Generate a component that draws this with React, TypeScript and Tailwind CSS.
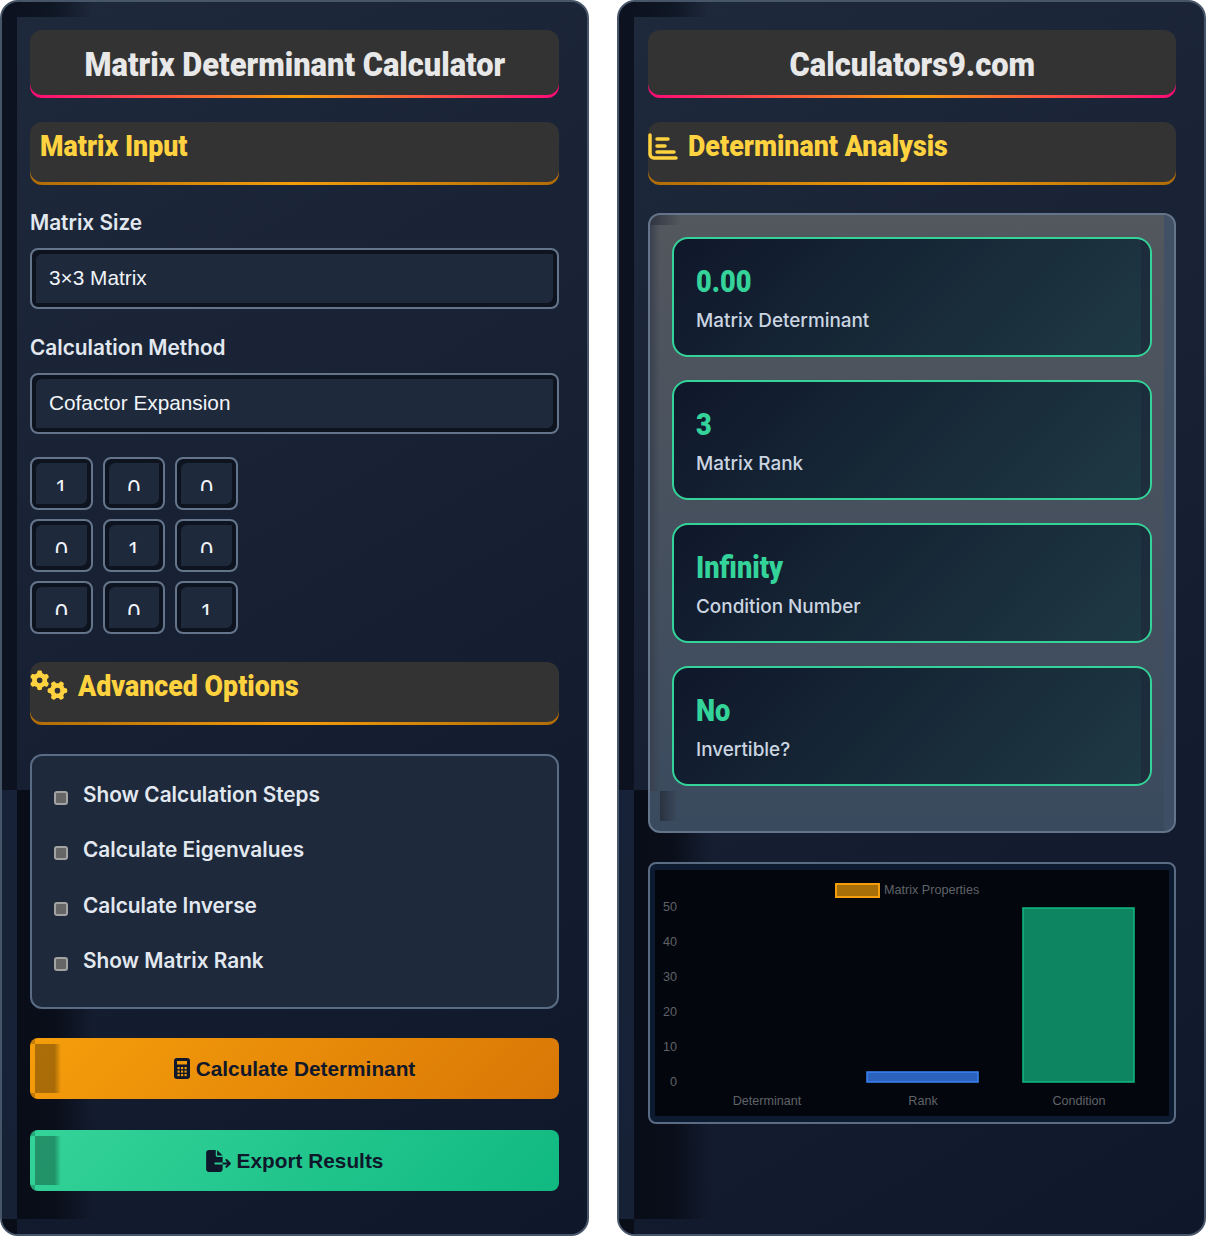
import { FaGears, FaFileExport } from "react-icons/fa6";

const inter = "[font-family:Inter,'Liberation_Sans',sans-serif]";
const lib = "[font-family:'Liberation_Sans',Arial,sans-serif]";

function Shadows() {
  return (
    <>
      <div className="absolute left-0 top-0 h-[788px] w-[15px] rounded-tl-[14px] bg-[#0c121f]" />
      <div className="absolute left-0 top-[788px] bottom-[0px] w-[15px] rounded-bl-[14px] bg-[#18233a]/70" />
      <div className="absolute left-[15px] top-0 h-[15px] w-[75px] bg-gradient-to-r from-[#0c121f] via-[#0c121f]/80 to-transparent" />
      <div className="absolute left-[15px] top-[788px] bottom-[15px] w-[78px] bg-gradient-to-r from-[#090d18] via-[#090d18]/90 to-transparent" />
      <div className="absolute left-0 bottom-0 h-[15px] w-[15px] rounded-bl-[14px] bg-[#090d18]" />
    </>
  );
}

function Title({ children }: { children: string }) {
  return (
    <div className="relative h-[68px] w-full">
      <div className="absolute inset-x-0 bottom-0 h-6 rounded-b-xl bg-[linear-gradient(90deg,#ff0a78,#f59e0b,#ff0a78)]" />
      <div className="relative flex h-[65px] items-center justify-center rounded-xl bg-[#333333] pt-[3px]">
        <span className="inline-block origin-center scale-x-[0.907] whitespace-nowrap font-['Roboto',sans-serif] text-[34px] font-black leading-none text-[#e8e8e8]">
          {children}
        </span>
      </div>
    </div>
  );
}

function Heading({ children, icon, pad }: { children: string; icon?: React.ReactNode; pad?: boolean }) {
  return (
    <div className="relative h-[63px] w-full">
      <div className="absolute inset-x-0 bottom-0 h-6 rounded-b-xl bg-[linear-gradient(90deg,#b06c08,#f59e0b,#b06c08)]" />
      <div className={`relative flex h-[60px] items-start gap-[10px] rounded-xl bg-[#333333] pt-[8px] ${pad ? "pl-[10px]" : ""}`}>
        {icon}
        <span className="inline-block origin-left scale-x-[0.893] whitespace-nowrap font-['Roboto',sans-serif] text-[30px] font-black leading-[32px] text-[#ffd23f]">
          {children}
        </span>
      </div>
    </div>
  );
}

function Field({ label, value, cls }: { label: string; value: string; cls: string }) {
  return (
    <div className={cls}>
      <div className="text-[20.8px] font-semibold leading-[27px] text-[#e2e8f0]">{label}</div>
      <div className={`mt-[12px] flex h-[61px] items-center rounded-lg border-2 border-[#64748b] bg-[#1e293b] pb-[2px] pl-[17px] text-[20.8px] text-[#f1f5f9] shadow-[inset_4px_4px_0_#0d1420,inset_-4px_-4px_0_#0d1420] ${lib}`}>
        {value}
      </div>
    </div>
  );
}

function Cell({ v }: { v: string }) {
  return (
    <div className="flex h-[53px] w-full items-start justify-center overflow-hidden rounded-lg border-2 border-[#64748b] bg-[#1e293b] pt-[20px] shadow-[inset_4px_4px_0_#0d1420,inset_-4px_-4px_0_#0d1420]">
      <span className={`block h-[12px] overflow-hidden text-[23px] leading-[20px] text-[#f1f5f9] ${lib}`}>{v}</span>
    </div>
  );
}

function Check({ label }: { label: string }) {
  return (
    <div className="flex h-[55.4px] items-start gap-[15px]">
      <div className="mt-[24px] h-[14px] w-[14px] shrink-0 rounded-[3px] border-2 border-[#a3a3a3] bg-[#666666]" />
      <span className="mt-[14px] text-[20.8px] font-semibold leading-[28px] text-[#e2e8f0]">{label}</span>
    </div>
  );
}

function Btn({ cls, icon, label }: { cls: string; icon: React.ReactNode; label: string }) {
  return (
    <div className={`relative flex h-[61px] items-center justify-center gap-[6px] overflow-hidden rounded-lg text-[20.8px] font-bold text-[#0f172a] ${lib} ${cls}`}>
      <div className="absolute left-[5px] top-[6px] h-[49px] w-[26px] bg-gradient-to-r from-black/30 from-75% to-transparent" />
      <div className="absolute left-0 top-0 h-[6px] w-[5px] bg-black/20" />
      <div className="absolute bottom-0 left-0 h-[6px] w-[5px] bg-black/20" />
      {icon}
      <span>{label}</span>
    </div>
  );
}

function ResultCard({ value, label }: { value: string; label: string }) {
  return (
    <div className="relative h-[120px] overflow-hidden rounded-2xl border-2 border-[#34d399] bg-[linear-gradient(135deg,#0f172a,#1f3a44)] pl-[22px] pt-[22px]">
      <div className="absolute bottom-0 right-0 top-0 w-[9px] bg-[#1e293b]/70" />
      <div className="h-[40px] origin-left scale-x-[0.85] font-['Roboto',sans-serif] text-[32px] font-black leading-[40px] text-[#34d399]">{value}</div>
      <div className="mt-[6px] text-[18.9px] font-medium leading-[28px] text-[#cbd5e1]">{label}</div>
    </div>
  );
}

function Chart() {
  const txt = "#5f6368";
  const ff = "'Liberation Sans',sans-serif";
  return (
    <svg viewBox="0 0 514 246" className="block h-[246px] w-[514px]">
      <rect width="514" height="246" fill="#03060d" />
      <rect x="181" y="14" width="43" height="13" fill="#a86f08" stroke="#f59e0b" strokeWidth="2" />
      <text x="229" y="24" fontSize="12.6" fontFamily={ff} fill={txt}>Matrix Properties</text>
      {[["50", 36], ["40", 71], ["30", 106], ["20", 141], ["10", 176], ["0", 211]].map(([l, y]) => (
        <text key={l as string} x="22" y={(y as number) + 5} textAnchor="end" fontSize="12.6" fontFamily={ff} fill={txt}>{l}</text>
      ))}
      <rect x="212" y="202" width="111" height="10" fill="#2b62bd" stroke="#3b82f6" strokeWidth="1.5" />
      <rect x="368" y="38" width="111" height="174" fill="#0d8560" stroke="#10b981" strokeWidth="1.5" />
      {[["Determinant", 112], ["Rank", 268], ["Condition", 424]].map(([l, x]) => (
        <text key={l as string} x={x as number} y="235" textAnchor="middle" fontSize="12.6" fontFamily={ff} fill={txt}>{l}</text>
      ))}
    </svg>
  );
}

function CalcIcon() {
  const cells = [];
  for (const y of [9, 12.5, 16]) for (const x of [3.5, 7, 10.5]) cells.push([x, y]);
  return (
    <svg viewBox="0 0 16 21" className="h-[21px] w-[16px] shrink-0">
      <rect width="16" height="21" rx="3" fill="#0f172a" />
      <rect x="3" y="3" width="10" height="3.5" fill="#ee9a0a" />
      {cells.map(([x, y], i) => <rect key={i} x={x} y={y} width="2.2" height="2.2" fill="#ee9a0a" />)}
    </svg>
  );
}

export default function App() {
  const panel = "relative h-[1236px] w-[589px] overflow-hidden rounded-[18px] border-2 border-[#475569] bg-[linear-gradient(150deg,#1e293b,#0f172a)]";
  return (
    <div className={`flex h-[1236px] w-[1206px] justify-between bg-white ${inter}`}>
      <div className={panel}>
        <Shadows />
        <div className="relative flex flex-col px-[28px] pt-[28px]">
          <Title>Matrix Determinant Calculator</Title>
          <div className="mt-[24px]"><Heading pad>Matrix Input</Heading></div>
          <Field cls="mt-[24px]" label="Matrix Size" value="3×3 Matrix" />
          <Field cls="mt-[25px]" label="Calculation Method" value="Cofactor Expansion" />
          <div className="mt-[23px] grid w-[208px] grid-cols-3 gap-x-[10px] gap-y-[9px]">
            {["1", "0", "0", "0", "1", "0", "0", "0", "1"].map((v, i) => <Cell key={i} v={v} />)}
          </div>
          <div className="mt-[28px]">
            <Heading icon={<FaGears className="h-[30px] w-[38px] shrink-0 text-[#ffd23f]" />}>Advanced Options</Heading>
          </div>
          <div className="mt-[29px] h-[255px] rounded-xl border-2 border-[#5a6b84] bg-[#1e293b] pl-[22px] pt-[11px]">
            {["Show Calculation Steps", "Calculate Eigenvalues", "Calculate Inverse", "Show Matrix Rank"].map((l) => <Check key={l} label={l} />)}
          </div>
          <div className="mt-[29px]">
            <Btn cls="bg-[linear-gradient(135deg,#f59e0b,#d97706)]" icon={<CalcIcon />} label="Calculate Determinant" />
          </div>
          <div className="mt-[31px]">
            <Btn cls="bg-[linear-gradient(135deg,#34d399,#10b981)]" icon={<FaFileExport className="h-[22px] w-[25px] shrink-0" />} label="Export Results" />
          </div>
        </div>
      </div>

      <div className={panel}>
        <Shadows />
        <div className="relative flex flex-col pl-[29px] pr-[28px] pt-[28px]">
          <Title>Calculators9.com</Title>
          <div className="mt-[24px]">
            <Heading
              icon={
                <svg viewBox="0 0 30 28" className="mt-[3px] h-[28px] w-[30px] shrink-0" fill="none" stroke="#ffd23f" strokeWidth="3.5" strokeLinecap="round">
                  <path d="M2 2V21a4 4 0 0 0 4 4H28" />
                  <path d="M9 6H20M9 13H17M9 19H26" />
                </svg>
              }
            >
              Determinant Analysis
            </Heading>
          </div>
          <div className="relative mt-[28px] flex h-[620px] flex-col gap-[23px] overflow-hidden rounded-xl border-2 border-[#64748b] bg-[linear-gradient(180deg,#53575e,#3a4a5e)] px-[22px] pt-[22px]">
            <div className="absolute left-0 top-0 h-[10px] w-[30px] bg-gradient-to-r from-[#2f3540] to-transparent" />
            <div className="absolute bottom-[40px] left-0 top-[10px] w-[10px] bg-gradient-to-r from-[#3a414e] to-transparent" />
            <div className="absolute bottom-0 right-0 top-0 w-[10px] bg-[#3f4f66]/80" />
            <div className="absolute bottom-[10px] left-[10px] h-[30px] w-[18px] bg-gradient-to-r from-[#2a3240] to-transparent" />
            <div className="relative"><ResultCard value="0.00" label="Matrix Determinant" /></div>
            <div className="relative"><ResultCard value="3" label="Matrix Rank" /></div>
            <div className="relative"><ResultCard value="Infinity" label="Condition Number" /></div>
            <div className="relative"><ResultCard value="No" label="Invertible?" /></div>
          </div>
          <div className="mt-[29px] h-[262px] overflow-hidden rounded-lg border-2 border-[#5a6b84] bg-[#0d1b30] px-[5px] py-[6px]">
            <Chart />
          </div>
        </div>
      </div>
    </div>
  );
}
